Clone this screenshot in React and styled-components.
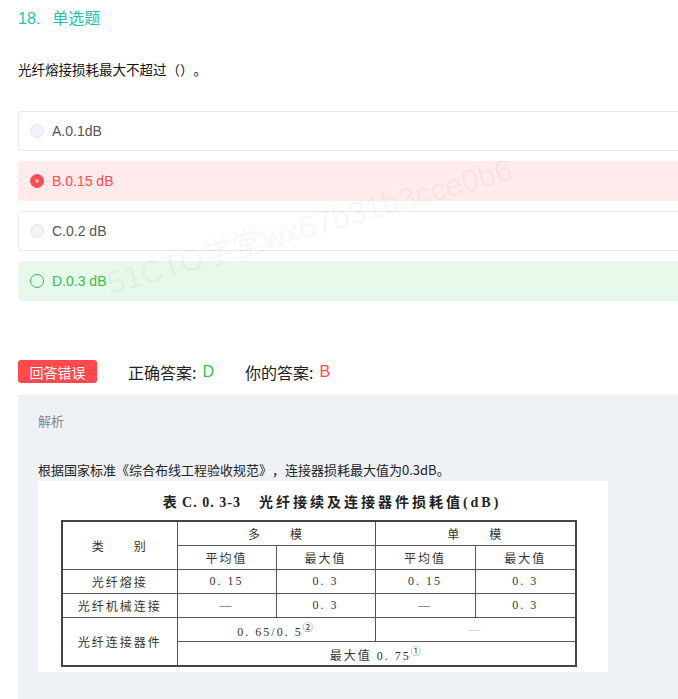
import React from "react";
import styled, { createGlobalStyle } from "styled-components";

const Global = createGlobalStyle`
  html, body { margin: 0; padding: 0; background: #fff; overflow: hidden; }
  body {
    font-family: "Noto Sans CJK SC", "Liberation Sans", sans-serif;
    color: #333;
    text-spacing-trim: space-all;
  }
`;

const Page = styled.div`
  position: relative;
  width: 700px;
  height: 699px;
  overflow: hidden;
  padding: 8px 0 0 18px;
`;

const Title = styled.div`
  display: flex;
  gap: 12px;
  font-size: 16px;
  line-height: 22px;
  color: #1fc1b2;
  font-family: "Liberation Sans", "Noto Sans CJK SC", sans-serif;
`;

const Question = styled.div`
  margin-top: 28px;
  font-size: 13.5px;
  line-height: 22px;
  color: #111;
`;

const Options = styled.div`
  margin-top: 31px;
  display: flex;
  flex-direction: column;
  gap: 10px;
`;

const tones = {
  normal: { bg: "#fff", border: "#e6e6ee", color: "#555" },
  wrong: { bg: "#ffebeb", border: "#ffebeb", color: "#ff4d4f" },
  right: { bg: "#e8f8ea", border: "#e8f8ea", color: "#2fc447" },
};

const Option = styled.div`
  box-sizing: border-box;
  height: 40px;
  border: 1px solid ${(p) => tones[p.$tone].border};
  background: ${(p) => tones[p.$tone].bg};
  border-radius: 4px;
  display: flex;
  align-items: center;
  padding-left: 11px;
  gap: 8px;
  color: ${(p) => tones[p.$tone].color};
  font-family: "Liberation Sans", "Noto Sans CJK SC", sans-serif;
  font-size: 14px;
`;

const Radio = styled.span`
  box-sizing: border-box;
  width: 14px;
  height: 14px;
  border-radius: 50%;
  flex: none;
  display: flex;
  align-items: center;
  justify-content: center;
  background: ${(p) => (p.$tone === "wrong" ? "#ff4d4f" : p.$tone === "right" ? "transparent" : "#f2f3f7")};
  border: 1px solid ${(p) => (p.$tone === "wrong" ? "#ff4d4f" : p.$tone === "right" ? "#2fc447" : "#e2e4ea")};
  &::after {
    content: "";
    width: 4px;
    height: 4px;
    border-radius: 50%;
    background: #bbb;
    display: ${(p) => (p.$tone === "wrong" ? "block" : "none")};
  }
`;

const Status = styled.div`
  margin-top: 59px;
  height: 23px;
  display: flex;
  align-items: center;
  font-size: 16px;
  color: #222;
`;

const Badge = styled.span`
  background: #ff4a4d;
  color: #fff;
  border-radius: 3px;
  width: 79px;
  height: 23px;
  display: flex;
  align-items: center;
  justify-content: center;
  font-size: 14px;
  margin-right: 31px;
`;

const AnswerLabel = styled.span`
  margin-right: ${(p) => p.$gap || 0}px;
  display: flex;
  align-items: center;
`;

const AnswerLetter = styled.span`
  color: ${(p) => p.$color};
  margin-left: 6px;
  font-family: "Liberation Sans", sans-serif;
  font-size: 16px;
`;

const Panel = styled.div`
  margin-top: 12px;
  background: #eef1f6;
  padding: 15px 20px 30px 20px;
  height: 300px;
`;

const PanelHead = styled.div`
  font-size: 13px;
  color: #888;
  line-height: 22px;
`;

const PanelText = styled.div`
  margin-top: 27px;
  font-size: 13px;
  color: #222;
  line-height: 22px;
`;

const Figure = styled.div`
  width: 570px;
  height: 191px;
  background: #fff;
  display: flex;
  flex-direction: column;
  align-items: center;
  font-family: "Liberation Serif", "Noto Sans CJK SC", serif;
  color: #333;
`;

const FigTitle = styled.div`
  margin-top: 13px;
  font-size: 14px;
  font-weight: bold;
  line-height: 18px;
  padding-left: 18px;
  color: #222;
  white-space: pre;
`;

const FigCode = styled.span`
  letter-spacing: 1px;
  margin-right: 18px;
`;

const FigName = styled.span`
  letter-spacing: 3px;
`;

const Table = styled.table`
  margin-top: 8px;
  margin-left: -8px;
  border-collapse: collapse;
  border: 2px solid #444;
  font-size: 12px;
  & td {
    border: 1px solid #555;
    text-align: center;
    padding: 0;
    height: 23px;
    letter-spacing: 2px;
  }
`;

const Col = styled.col`
  width: ${(p) => p.$w}px;
`;

const Faint = styled.span`
  color: #bbb;
`;

const Watermark = styled.div`
  position: absolute;
  left: 107px;
  top: 259px;
  font-family: "Liberation Sans", "Noto Sans CJK SC", sans-serif;
  font-size: 31px;
  color: rgba(0, 0, 0, 0.05);
  transform: rotate(-16deg);
  transform-origin: left center;
  white-space: nowrap;
  pointer-events: none;
`;

const options = [
  { text: "A.0.1dB", tone: "normal" },
  { text: "B.0.15 dB", tone: "wrong" },
  { text: "C.0.2 dB", tone: "normal" },
  { text: "D.0.3 dB", tone: "right" },
];

export default function App() {
  return (
    <>
      <Global />
      <Page>
        <Title>
          <span>18.</span>
          <span>单选题</span>
        </Title>
        <Question>光纤熔接损耗最大不超过（）。</Question>
        <Options>
          {options.map((o) => (
            <Option key={o.text} $tone={o.tone}>
              <Radio $tone={o.tone} />
              {o.text}
            </Option>
          ))}
        </Options>
        <Status>
          <Badge>回答错误</Badge>
          <AnswerLabel $gap={31}>
            正确答案:<AnswerLetter $color="#2fc447">D</AnswerLetter>
          </AnswerLabel>
          <AnswerLabel>
            你的答案:<AnswerLetter $color="#ff4d4f">B</AnswerLetter>
          </AnswerLabel>
        </Status>
        <Panel>
          <PanelHead>解析</PanelHead>
          <PanelText>根据国家标准《综合布线工程验收规范》，连接器损耗最大值为0.3dB。</PanelText>
          <Figure>
            <FigTitle>
              <FigCode>表 C. 0. 3-3</FigCode>
              <FigName>光纤接续及连接器件损耗值(dB)</FigName>
            </FigTitle>
            <Table>
              <colgroup>
                <Col $w={115} />
                <Col $w={99} />
                <Col $w={99} />
                <Col $w={100} />
                <Col $w={101} />
              </colgroup>
              <tbody>
                <tr>
                  <td rowSpan={2}>类　　别</td>
                  <td colSpan={2}>多　　模</td>
                  <td colSpan={2}>单　　模</td>
                </tr>
                <tr>
                  <td>平均值</td>
                  <td>最大值</td>
                  <td>平均值</td>
                  <td>最大值</td>
                </tr>
                <tr>
                  <td>光纤熔接</td>
                  <td>0. 15</td>
                  <td>0. 3</td>
                  <td>0. 15</td>
                  <td>0. 3</td>
                </tr>
                <tr>
                  <td>光纤机械连接</td>
                  <td>—</td>
                  <td>0. 3</td>
                  <td>—</td>
                  <td>0. 3</td>
                </tr>
                <tr>
                  <td rowSpan={2}>光纤连接器件</td>
                  <td colSpan={2}>0. 65/0. 5<sup>②</sup></td>
                  <td colSpan={2}><Faint>—</Faint></td>
                </tr>
                <tr>
                  <td colSpan={4}>最大值 0. 75<sup>①</sup></td>
                </tr>
              </tbody>
            </Table>
          </Figure>
        </Panel>
        <Watermark>51CTO学堂wx67b31b3cce0b6</Watermark>
      </Page>
    </>
  );
}
